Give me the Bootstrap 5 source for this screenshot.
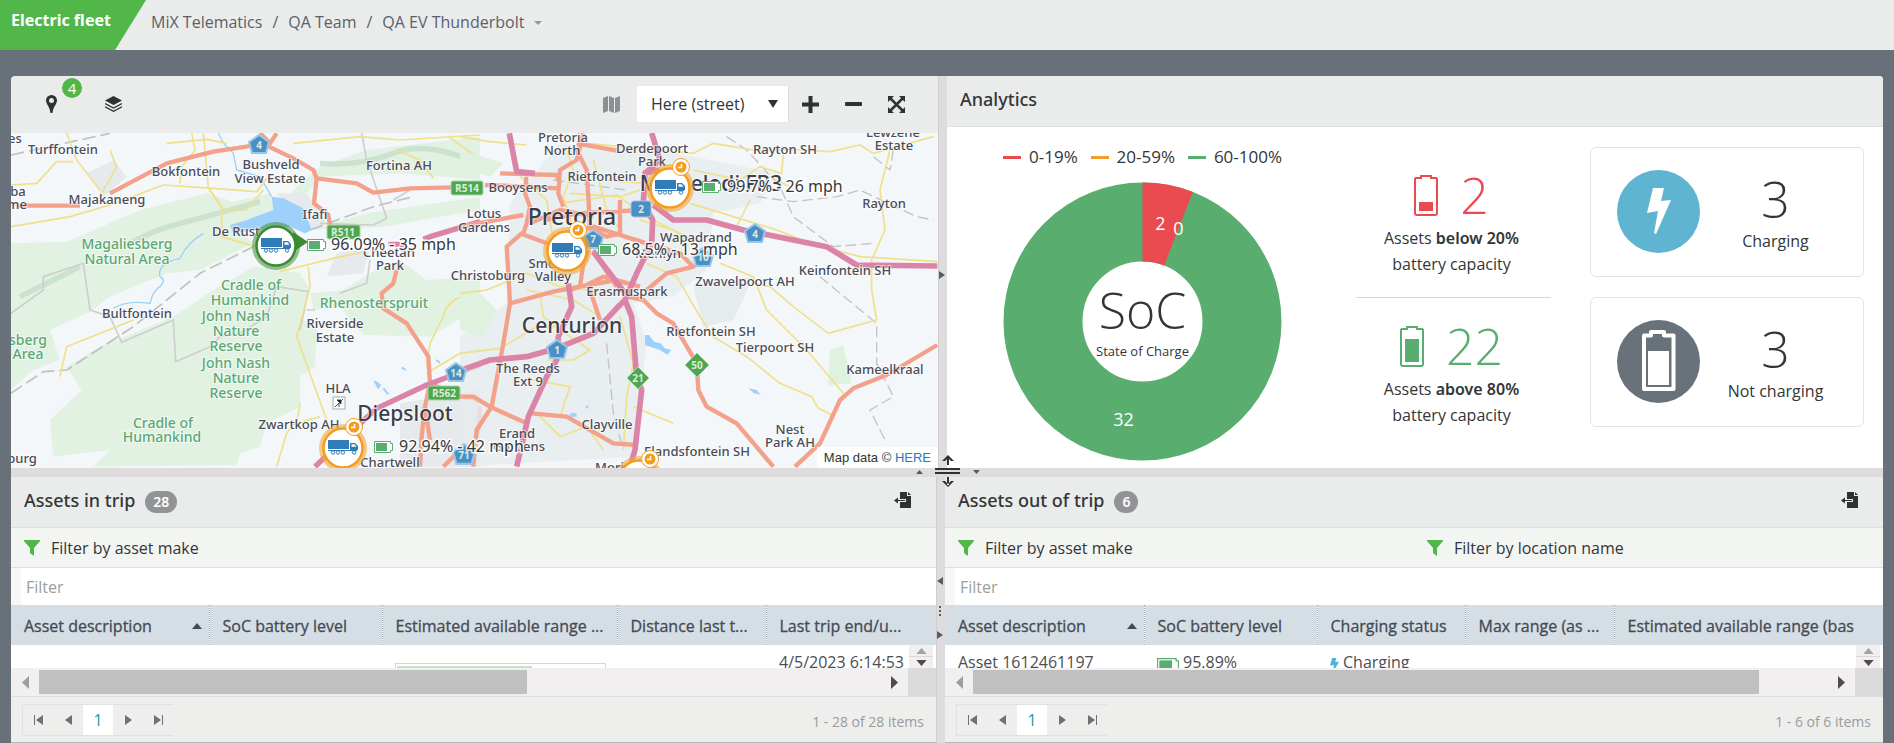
<!DOCTYPE html>
<html lang="en">
<head>
<meta charset="utf-8">
<meta name="viewport" content="width=device-width, initial-scale=1">
<title>Electric fleet</title>
<link rel="stylesheet" href="https://cdn.jsdelivr.net/npm/bootstrap@5.3.0/dist/css/bootstrap.min.css">
<style>
  :root { --slate:#68707a; --bar:#eaecec; --split:#dedcdd; --ink:#333537; --line:#dcdedf; --green:#50b748; --leaf:#59ae6f; --red:#e94b50; }
  body { font-family:"Open Sans","Noto Sans",sans-serif; font-size:16px; line-height:24px; color:var(--ink); background:var(--slate); min-height:100vh; }
  button { border:0; background:none; padding:0; color:inherit; }
  svg { display:block; }
  .topbar { height:50px; background:var(--bar); }
  .app-tag { width:146px; padding:8px 11px; background:var(--green); color:#fff; font-family:"Noto Sans",sans-serif; font-weight:700; clip-path:polygon(0 0,100% 0,115px 100%,0 100%); white-space:nowrap; }
  .crumbs { color:#5b6168; --bs-breadcrumb-divider-color:#5b6168; --bs-breadcrumb-item-padding-x:10px; margin:-7px 0 0 5px; }
  .crumbs a { color:inherit; text-decoration:none; }
  .crumbs .dropdown-toggle::after { margin-left:10px; color:#999; vertical-align:3px; border-width:4px; border-bottom:0; }
  .board { margin:26px 11px 0; }
  .halves { display:grid; grid-template-columns:minmax(0,927fr) 9px minmax(0,936fr); }
  .lower { grid-template-columns:minmax(0,925fr) 9px minmax(0,938fr); }
  .upper { min-height:392px; border-radius:4px 4px 0 0; overflow:hidden; }
  .splitter { background:var(--split); position:relative; color:#555; border-left:1px solid #cfcdce; }
  .h-splitter { height:9px; background:var(--split); position:relative; }
  .tick { position:absolute; }
  .panel-head { height:51px; padding:0 13px 4px; background:var(--bar); border-bottom:1px solid var(--line); font-family:"Noto Sans",sans-serif; font-size:18px; font-weight:500; }
  .map-tools { height:57px; padding:10px 20px 10px 21px; background:var(--bar); }
  .tool { width:43px; height:36px; display:flex; align-items:center; justify-content:center; }
  .tool-left { width:38px; }
  .count-dot { position:absolute; left:30px; top:-8px; width:20px; height:20px; border-radius:50%; background:var(--green); color:#fff; font-size:15px; line-height:20px; text-align:center; }
  .map-select { width:152px; height:36px; border:0; padding:0 12px 0 14px; background:#fff; appearance:none; color:var(--ink); border-right:1px solid var(--line); }
  .select-arrow { position:absolute; right:11px; top:14px; pointer-events:none; }
  .map { position:relative; min-height:0; background:#f4f7f9; overflow:hidden; }
  .map > svg { position:absolute; width:100%; height:100%; }
  .map-credit { position:absolute; right:0; bottom:0; padding:0 7px; font:13px/21px "Liberation Sans",sans-serif; background:rgba(255,255,255,.8); }
  .map-credit a { color:#2a7ab8; text-decoration:none; }
  .place { font-family:"Noto Sans",sans-serif; font-weight:500; font-size:13px; fill:#4a4c58; text-anchor:middle; paint-order:stroke; stroke:#fff; stroke-width:2px; stroke-opacity:.6; }
  .city { font-size:21px; fill:#3c3e49; }
  .capital { font-size:23px; fill:#3c3e49; }
  .park { fill:#5aa873; font-size:14px; }
  .shield { font-size:10px; font-weight:700; fill:#dcecd8; text-anchor:middle; }
  .reading { font-family:"Noto Sans",sans-serif; font-size:16px; font-weight:400; fill:#35383c; paint-order:stroke; stroke:#fff; stroke-width:3px; stroke-opacity:.85; }
  .analytics { padding:16px 19px 0 56px; background:#fff; }
  .legend-row { font-size:17px; margin:2px 0 13px; }
  .legend-key { width:18px; height:3px; }
  .donut-col { width:279px; margin-right:74px; }
  .stat-col { width:195px; margin-right:39px; text-align:center; line-height:26px; }
  .figure-num { font-size:50px; line-height:52px; font-weight:300; }
  .figure-row { margin-bottom:4px; gap:22px; }
  .stat { height:150px; padding:22px 4px 0 0; }
  .stat + .stat { border-top:1px solid #d4d6d8; }
  .stat b { font-family:"Noto Sans",sans-serif; font-weight:600; }
  .charge-card { height:130px; border:1px solid #e0e3e4; border-radius:6px; padding:2px 12px 0 26px; }
  .charge-card .figure-num { margin-bottom:4px; }
  .disc { width:83px; height:83px; border-radius:50%; margin-bottom:4px; }
  .count-pill { background:#929397; color:#fff; font-size:14px; line-height:22px; font-weight:600; border-radius:11px; padding:0 8px; margin:3px 0 0 10px; }
  .filter-line { height:40px; padding:0 13px; gap:13px; background:#f3f5f3; border-bottom:1px solid var(--line); overflow:hidden; }
  .filter-line button { width:50%; gap:11px; flex-shrink:0; }
  .filter-input { height:37px; width:100%; border:0; border-left:10px solid #f6f7f6; padding:0 5px; display:block; color:var(--ink); }
  .filter-input::placeholder { color:#9aa09c; }
  .grid-view { height:63px; overflow:hidden; position:relative; background:#fff; }
  .grid-view table { table-layout:fixed; width:100%; border-collapse:collapse; }
  .grid-view th { height:40px; padding:2px 8px 0 13px; background:#d6dee5; color:#434a54; font-weight:500; -webkit-text-stroke:.3px #434a54; white-space:nowrap; border-right:1px dotted #a9b2bb; position:relative; overflow:hidden; }
  .grid-view th:last-child { border-right:0; }
  .grid-view th svg { position:absolute; right:7px; top:18px; }
  .grid-view td { padding:5px 0 0 13px; height:40px; vertical-align:top; white-space:nowrap; font-weight:400; color:#4a4e53; }
  .range-meter { width:211px; height:18px; border:1px solid #d6d6d6; margin-top:13px; padding:2px 0 0 1px; background:#fff; }
  .range-fill { height:12px; background:#c4e2c8; }
  .v-scroll { position:absolute; right:3px; top:40px; width:24px; height:23px; background:#f1eff0; display:flex; flex-direction:column; align-items:center; justify-content:space-evenly; }
  .v-scroll hr { width:100%; margin:0; color:#999; }
  .h-scroll { height:29px; background:#f1eff0; border-bottom:1px solid var(--line); }
  .h-scroll .end { width:28px; display:flex; align-items:center; justify-content:center; }
  .h-thumb { height:24px; background:#c0c0c0; }
  .h-corner { width:28px; background:#dadada; align-self:stretch; }
  .pager { height:46px; padding:0 12px 0 11px; background:#eeeeed; border-bottom:1px solid #b5b7b8; color:#999c9e; font-size:14px; }
  .pager-box { border:1px solid #e0e2e2; border-right:0; height:32px; color:#777a7c; }
  .pager-box button, .pager-box span { width:30px; height:30px; display:flex; align-items:center; justify-content:center; }
  .pager-box span { background:#fff; color:#2a9a96; font-size:16px; }
  .resize-mark { position:absolute; left:50%; top:455px; z-index:3; margin-left:-12px; }
</style>
</head>
<body class="d-flex flex-column">

<svg width="0" height="0" class="position-absolute" aria-hidden="true">
  <symbol id="i-up" viewBox="0 0 12 7"><path d="M0 7L6 0l6 7z" fill="currentColor"/></symbol>
  <symbol id="i-down" viewBox="0 0 12 7"><path d="M0 0l6 7 6-7z" fill="currentColor"/></symbol>
  <symbol id="i-left" viewBox="0 0 7 13"><path d="M7 0L0 6.500 7 13z" fill="currentColor"/></symbol>
  <symbol id="i-right" viewBox="0 0 7 13"><path d="M0 0l7 6.500L0 13z" fill="currentColor"/></symbol>
  <symbol id="i-funnel" viewBox="0 0 16 16"><path d="M0 0h16v1L10 8v8l-4-3V8L0 1z" fill="#50b748"/></symbol>
  <symbol id="i-export" viewBox="0 0 17 16"><path d="M6 0h7v4h4v12H6v-6h6V7H6z" fill="#2f3133"/><path d="M14 0l3 3h-3z" fill="#2f3133"/><path d="M0 8.500l4-3V8h7v1H4v2.500z" fill="#2f3133"/></symbol>
  <symbol id="i-bat-v" viewBox="0 0 24 42"><path d="M2 4h5V2h10v2h5q1 0 1 1v34q0 2-2 2H3q-2 0-2-2V5q0-1 1-1z" fill="none" stroke="currentColor" stroke-width="2"/></symbol>
  <symbol id="i-bat-h" viewBox="0 0 19 12"><path d="M.500.500h16v2h2v7h-2v2H.500z" fill="#fff" stroke="#59ae6f"/><path d="M2 2h11v8H2z" fill="#59ae6f"/></symbol>
  <symbol id="i-bolt" viewBox="0 0 24 46"><path d="M6 0h11l-3 13 10-1L9 46l-2-1 4-22-11 2z" fill="currentColor"/></symbol>
  <symbol id="i-truck" viewBox="0 0 30 15"><g fill="#2f7cb8"><path d="M0 0h21v9H0z"/><path fill-rule="evenodd" d="M0 10h29v1H0zM22 3h5l3 3v4h-8zm1.500 1.200v2.500h5l-2-2.500z"/></g><g fill="#fff" stroke="#2f7cb8"><circle cx="5" cy="12.500" r="1.700"/><circle cx="10" cy="12.500" r="1.700"/><circle cx="15" cy="12.500" r="1.700"/><circle cx="26" cy="12.500" r="1.700"/></g></symbol>
  <symbol id="i-marker" viewBox="-25 -30 50 55"><circle r="24" fill="#f5a63a" opacity=".6"/><circle r="19.500" fill="#fff" stroke="#f49c1c" stroke-width="2.500"/><use href="#i-truck" x="-15" y="-8" width="30" height="15"/><circle cx="11" cy="-21" r="8.500" fill="#fff" stroke="#f49c1c" stroke-width="1"/><circle cx="11" cy="-21" r="5.500" fill="#f49c1c"/><path d="M11.500-24v3.500H8" fill="none" stroke="#fff" stroke-width="1.500"/></symbol>
  <symbol id="i-pent" viewBox="0 0 22 20"><path d="M11 1l10 7-3 11H4L1 8z" fill="#4a90c6" stroke="#9cc6e4" stroke-width="2"/></symbol>
</svg>

<header class="topbar d-flex">
  <div class="app-tag">Electric fleet</div>
  <nav class="d-flex align-items-center" aria-label="breadcrumb">
    <ol class="breadcrumb crumbs">
      <li class="breadcrumb-item"><a href="#">MiX Telematics</a></li>
      <li class="breadcrumb-item"><a href="#">QA Team</a></li>
      <li class="breadcrumb-item"><a href="#" class="dropdown-toggle">QA EV Thunderbolt</a></li>
    </ol>
  </nav>
</header>

<main class="board flex-grow-1 d-flex flex-column">
  <div class="halves upper flex-grow-1">
    <section class="d-flex flex-column">
      <div class="map-tools d-flex justify-content-between">
        <div class="d-flex position-relative">
          <button class="tool tool-left" aria-label="Locations"><svg width="11" height="18" viewBox="0 0 11 18" fill="#2f3133"><path fill-rule="evenodd" d="M5.500 0A5.500 5.500 0 0 1 11 5.500C11 9 7 12 6.500 18h-2C4 12 0 9 0 5.500A5.500 5.500 0 0 1 5.500 0zm0 3a2.500 2.500 0 1 0 0 5 2.500 2.500 0 0 0 0-5z"/></svg></button>
          <span class="count-dot">4</span>
          <button class="tool tool-left ms-4" aria-label="Layers"><svg width="17" height="16" viewBox="0 0 17 16"><path d="M8.500 0L17 4.500 8.500 9 0 4.500z" fill="#2f3133"/><path d="M0 7.500l8.500 4.500L17 7.500M0 10.800l8.500 4.500 8.500-4.500" fill="none" stroke="#2f3133" stroke-width="1.300"/></svg></button>
        </div>
        <div class="d-flex align-items-stretch">
          <span class="tool pe-2"><svg width="17" height="17" viewBox="0 0 17 17"><path d="M0 2l5-2v15l-5 2zm6-2l5 2v15l-5-2zm6 2l5-2v15l-5 2z" fill="#8d8f94"/></svg></span>
          <div class="position-relative">
            <select class="map-select" aria-label="Map style"><option>Here (street)</option></select>
            <svg class="select-arrow" width="10" height="8" viewBox="0 0 12 7" preserveAspectRatio="none"><path d="M0 0l6 7 6-7z" fill="#2f3133"/></svg>
          </div>
          <button class="tool" aria-label="Zoom in"><svg width="17" height="17" viewBox="0 0 17 17"><path d="M6.500 0h4v6.500H17v4h-6.500V17h-4v-6.500H0v-4h6.500z" fill="#2f3133"/></svg></button>
          <button class="tool" aria-label="Zoom out"><svg width="17" height="4" viewBox="0 0 17 4"><rect width="17" height="4" rx="1" fill="#2f3133"/></svg></button>
          <button class="tool" aria-label="Full screen"><svg width="17" height="17" viewBox="0 0 17 17"><path d="M0 0h6L0 6zm17 0v6l-6-6zM0 17v-6l6 6zm17 0h-6l6-6z" fill="#2f3133"/><path d="M2 2l13 13M15 2L2 15" stroke="#2f3133" stroke-width="2.500"/></svg></button>
        </div>
      </div>

      <div class="map flex-grow-1">
        <svg viewBox="11 133 927 335" preserveAspectRatio="xMinYMin slice" role="img" aria-label="Fleet map">
          <!-- western half -->
          <g transform="translate(0 130) scale(.33333)" fill="none" stroke-linejoin="round">
            <g fill="#e1f2e2">
              <path d="M33 470V340L200 335 420 240 620 190 700 215 810 190 830 270 690 285 760 340 600 420 500 430 330 500 270 545 150 600 180 690 100 720 33 780z"/>
              <path d="M150 870L245 780 200 710 300 650 520 560 640 480 760 410 900 430 930 480 900 560 950 600 945 710 900 740 900 830 800 880 780 950 720 970 710 1005 280 1010 330 960 160 980z"/>
              <path d="M870 190L960 110 1100 60 1440 20V150L1200 130 960 140 900 215zM930 300L1100 250 1440 200V240L1150 290z"/>
              <path d="M930 490L1030 480 1110 430 1200 390 1280 450 1440 440V530L1290 620 1090 615 1020 530 940 540z"/>
            </g>
            <path d="M380 345Q460 300 540 280T780 215M960 100Q1080 110 1180 70T1430 100M60 500L240 410" stroke="#c6ddcb" stroke-width="16" opacity=".8"/>
            <g fill="#e6eaec"><path d="M1200 820l240-40v230h-240zM1010 370l100-20-20 80-110 10zM830 190l90 0 60 90-60 20zM260 130l80-40 40 50-70 60z"/></g>
            <g stroke="#d0cdd1" stroke-width="5">
              <path d="M33 550L130 480V440L250 400 270 540 330 560 365 637 520 570 527 695 630 650 660 620 720 610 800 560 830 470 925 485 900 600M920 540h25M1020 490L1100 460 1110 390M1085 9L1100 90 1160 265 1120 285 960 280M1230 180L1180 210"/>
              <path d="M33 790L130 725 200 720 400 590 600 430 760 350M33 75L330 10M930 300L1120 230 1240 200" stroke-dasharray="40 15" stroke="#c0bfc4"/>
            </g>
            <path d="M655 9L670 40 700 70 710 120 780 140 815 200M610 310Q560 340 540 385 470 400 480 440 500 450 480 470 460 480 450 520 380 510 340 535" stroke="#9dd0f5" stroke-width="4"/>
            <path d="M815 200L850 205 910 235 935 300 915 310 870 290 760 300 700 310 690 285 740 270 820 240z" fill="#9dd0fb"/>
            <path d="M1125 755l15 10-5 8zM1150 775l15 18M1205 712l12 8M1308 690l12 8" stroke="#9dd0fb" stroke-width="6"/>
            <g stroke="#efe08a" stroke-width="5">
              <path d="M33 290L210 260 330 225 490 165 640 175 770 185 800 145M200 9L230 90 300 180M33 165L110 160 170 95 220 95M500 40L620 28 680 40M575 9L585 60 545 110 540 160M610 10L625 175 670 240 740 240 790 180M630 180L665 230 665 320 765 350"/>
              <path d="M840 425L1000 385 1095 365M925 410L930 470 890 620 980 870M890 870L860 910 830 1010M960 860L890 880 900 820M1440 485Q1340 500 1330 560L1290 640 1280 710M1280 730L1380 670 1440 660M180 740L200 650 400 570M880 40L1080 20 1200 30 1440 15M1190 60L1260 90 1300 145M1345 20L1430 80M300 200L350 110 330 60" />
            </g>
            <g stroke="#f3a18b" stroke-width="13">
              <path d="M50 227H240M330 190L500 100 640 65 790 42 880 85 940 120 950 145 1070 160 1120 188 1230 175 1360 172M950 145L942 220 985 255 990 285M780 9L810 40 830 10M1190 420L1180 460 1145 490 1150 535 1220 580 1285 680 1290 760 1275 830 1265 920 1260 1010M1290 760L1380 800 1420 805 1440 815M1275 830L1290 930M1440 880L1425 930 1380 960 1330 1010M1440 830L1435 900"/>
            </g>
            <path d="M945 1010L1060 900 1130 835 1280 765 1440 705M1270 328L1290 320 1440 275M1165 343H1215" stroke="#dc84a7" stroke-width="16"/>
          </g>
          <!-- eastern half -->
          <g transform="translate(460 130) scale(.33333)" fill="none" stroke-linejoin="round">
            <g fill="#e6ebee"><path d="M0 620L140 520 150 220 300 40 600 60 950 130 900 220 760 250 740 420 640 500 520 520 560 640 520 980 0 1010z" opacity=".8"/><path d="M700 470l180-30-60 130-90 20z"/></g>
            <path d="M0 480L50 480 110 540 70 620 0 600zM1110 660l40-15 25 115-70 5zM0 60l130 40-40 40-90-30z" fill="#dff1df"/>
            <path d="M555 615l12 0 15 20 20 5 12 15 20 5-12 14-22-14-45-15zM865 775l25 5 12 15-20-5zM375 830l12-5-5 12zM330 850h20v10h-20zM788 10l8 5M758 225l10 5" fill="#9dd0fb"/>
            <g stroke="#c3c2c7" stroke-width="4" stroke-dasharray="32 14">
              <path d="M800 20L860 60 960 170 1000 260 1120 350 1240 340M1300 60L1290 120 1240 80M890 200L1000 215 1130 200 1200 180 1370 260 1420 270M1080 440L1250 580 1250 700 1300 800 1230 840 1280 940M440 640L460 850 490 960M280 150L500 180"/>
            </g>
            <g stroke="#efe08a" stroke-width="5">
              <path d="M0 20L90 35 200 45M380 40L700 70 760 40 880 60 1030 60 1110 65 1200 45 1240 70 1420 20M970 70L965 130 900 110 840 150 700 120M1290 60L1260 180 1275 300 1235 390 1235 480 1250 570 1105 610 1000 530 930 470 880 460M690 220L820 260 950 300 1050 340 1200 380 1432 395M780 400L880 440 920 540 1040 660 1150 790M560 400L650 440 720 560 760 620 860 680 960 760 1055 800 1075 835 1115 855M0 670L120 655 230 590 290 590M0 490L80 480 200 430 300 470 470 490M240 490L250 560 330 620 390 660 340 690 260 690M330 190L480 200 540 180M300 220L470 195 560 260 700 330M480 560L520 700 500 800 490 960M320 60L340 120 310 200 340 300M400 90L440 240 500 330M200 480L340 510 420 560M420 150L560 160M220 750L330 770 300 860 M540 270L640 300 740 380M180 140L260 210 280 330M240 860L300 920 380 890 430 960M930 140L1010 180 M640 880L520 830M870 210L830 290"/>
            </g>
            <g stroke="#f3a18b" stroke-width="13">
              <path d="M75 165L200 170 290 175M120 130L290 135 300 160M350 40L470 62M370 10L350 90 300 120 295 190 310 230M200 130L195 190 210 230 200 280 190 310M350 60L380 120 385 200 390 290 340 310M0 290L190 255M180 310L260 340M185 310L140 350 145 430 150 520 130 640 95 830 50 900 40 1010M0 800L40 800 90 830 200 880M215 850L320 860 460 940 530 945M260 345L400 290 560 340M480 210V310L440 320 400 300M550 240L350 250 260 270M150 520L280 485 330 475 470 450 540 470M330 480L360 470 370 400 385 360M400 360L420 395 470 470M500 500L550 510 590 550 640 580 710 700 715 780 740 830 830 880 940 1010M560 480L620 430 700 410 660 370 560 340M390 480L420 570M370 470L430 440 500 460M1005 1010L1080 940 1140 810 1180 775 1280 735 1432 645M210 280L300 240 400 260"/>
            </g>
            <g stroke="#dc84a7" stroke-width="17">
              <path d="M0 722L90 690 200 680 290 655 400 610 470 535 495 510 530 430 575 340 578 270 550 220 555 130 600 90 575 9M495 510L515 560 530 740 545 780 525 960 510 1010M550 130L600 120M148 10L170 125 225 130M580 225L640 270 740 270 850 300 1100 350 1190 405 1432 408M495 490L400 365M325 460L335 530 295 620 290 690 260 740 205 860 170 1010"/>
            </g>
          </g>
          <g>
            <use href="#i-pent" x="248" y="134" width="22" height="20"/><use href="#i-pent" x="744" y="223" width="22" height="20"/><use href="#i-pent" x="546" y="339" width="22" height="20"/><use href="#i-pent" x="445" y="362" width="22" height="20"/><use href="#i-pent" x="452" y="443" width="24" height="22"/><use href="#i-pent" x="582" y="229" width="22" height="20"/><use href="#i-pent" x="691" y="247" width="24" height="20"/>
            <rect x="631" y="201" width="20" height="16" rx="3" fill="#4a90c6" stroke="#9cc6e4"/>
            <g fill="#4fa64e" stroke="#a8d6a6"><rect x="451" y="181" width="32" height="14" rx="2"/><rect x="327" y="225" width="33" height="14" rx="2"/><rect x="428" y="386" width="32" height="14" rx="2"/><path d="M697 353l12 12-12 12-12-12zM638 367l11 11-11 11-11-11z"/></g>
            <g class="shield"><text x="259" y="149">4</text><text x="755" y="238">4</text><text x="557" y="354">1</text><text x="456" y="377">14</text><text x="464" y="459">71</text><text x="593" y="243">7</text><text x="703" y="261">10</text><text x="641" y="213">2</text><text x="467" y="192">R514</text><text x="343" y="236">R511</text><text x="444" y="397">R562</text><text x="697" y="369">50</text><text x="638" y="382">21</text></g>
            <rect x="333" y="397" width="12" height="12" fill="#fff" stroke="#aaa"/><path d="M335 407l8-8M337 400l4 4v-4zm2 3v4" stroke="#444"/>
          </g>
          <g class="place">
            <text x="15" y="143">es</text><text x="63" y="154">Turffontein</text><text x="186" y="176">Bokfontein</text><text x="271" y="169">Bushveld</text><text x="270" y="183">View Estate</text><text x="399" y="170">Fortina AH</text><text x="18" y="196">ba</text><text x="17" y="209">me</text><text x="107" y="204">Majakaneng</text><text x="315" y="219">Ifafi</text><text x="236" y="236">De Rust</text><text x="389" y="257">Cheetah</text><text x="390" y="270">Park</text><text x="137" y="318">Bultfontein</text><text x="335" y="328">Riverside</text><text x="335" y="342">Estate</text><text x="338" y="393">HLA</text><text x="299" y="429">Zwartkop AH</text><text x="390" y="467">Chartwell</text><text x="22" y="463">burg</text>
            <text x="563" y="142">Pretoria</text><text x="562" y="155">North</text><text x="652" y="153">Derdepoort</text><text x="652" y="166">Park</text><text x="785" y="154">Rayton SH</text><text x="893" y="137">Lewzene</text><text x="894" y="150">Estate</text><text x="602" y="181">Rietfontein</text><text x="518" y="192">Booysens</text><text x="884" y="208">Rayton</text><text x="484" y="218">Lotus</text><text x="484" y="232">Gardens</text><text x="696" y="242">Wapadrand</text><text x="658" y="258">Menlyn</text><text x="845" y="275">Keinfontein SH</text><text x="745" y="286">Zwavelpoort AH</text><text x="488" y="280">Christoburg</text><text x="548" y="268">Smuts</text><text x="553" y="281">Valley</text><text x="627" y="296">Erasmuspark</text><text x="711" y="336">Rietfontein SH</text><text x="775" y="352">Tierpoort SH</text><text x="885" y="374">Kameelkraal</text><text x="528" y="373">The Reeds</text><text x="528" y="386">Ext 9</text><text x="607" y="429">Clayville</text><text x="790" y="434">Nest</text><text x="790" y="447">Park AH</text><text x="517" y="438">Erand</text><text x="519" y="451">Gardens</text><text x="697" y="456">Elandsfontein SH</text><text x="612" y="472">Morit</text>
            <text class="capital" x="572" y="225">Pretoria</text><text class="city" x="711" y="191">Mamelodi FB3</text><text class="city" x="572" y="333">Centurion</text><text class="city" x="405" y="421">Diepsloot</text>
            <g class="park"><text x="127" y="249">Magaliesberg</text><text x="127" y="264">Natural Area</text><text x="251" y="290">Cradle of</text><text x="250" y="305">Humankind</text><text x="236" y="321">John Nash</text><text x="236" y="336">Nature</text><text x="236" y="351">Reserve</text><text x="236" y="368">John Nash</text><text x="236" y="383">Nature</text><text x="236" y="398">Reserve</text><text x="374" y="308">Rhenosterspruit</text><text x="28" y="345">sberg</text><text x="28" y="359">Area</text><text x="163" y="428">Cradle of</text><text x="162" y="442">Humankind</text></g>
          </g>
          <g><circle cx="276" cy="246" r="24" fill="#4d9a45" opacity=".6"/><path d="M293 232l15 10-15 10z" fill="#3c8a34"/><circle cx="276" cy="246" r="19.500" fill="#fff" stroke="#3c8a34" stroke-width="2.500"/><use href="#i-truck" x="261" y="238" width="30" height="15"/></g>
          <use href="#i-marker" x="542" y="221" width="50" height="55"/>
          <use href="#i-marker" x="645" y="158" width="50" height="55"/>
          <use href="#i-marker" x="318" y="418" width="50" height="55"/>
          <use href="#i-marker" x="614" y="450" width="50" height="55"/>
          <g><use href="#i-bat-h" x="307" y="239" width="19" height="12"/><use href="#i-bat-h" x="598" y="244" width="19" height="12"/><use href="#i-bat-h" x="702" y="181" width="19" height="12"/><use href="#i-bat-h" x="374" y="441" width="19" height="12"/></g>
          <g class="reading"><text x="331" y="250">96.09% - 35 mph</text><text x="622" y="255">68.5% - 13 mph</text><text x="727" y="192">99.7% - 26 mph</text><text x="399" y="452">92.94% - 42 mph</text></g>
        </svg>
        <div class="map-credit">Map data © <a href="#">HERE</a></div>
      </div>
    </section>

    <div class="splitter"><svg class="tick" style="top:195px" width="6" height="8" viewBox="0 0 7 13" preserveAspectRatio="none"><path d="M0 0l7 6.500L0 13z" fill="#555b63"/></svg></div>

    <section class="d-flex flex-column bg-white">
      <div class="panel-head d-flex align-items-center">Analytics</div>
      <div class="analytics d-flex flex-grow-1">
        <div class="donut-col">
          <div class="legend-row d-flex justify-content-between">
            <span class="d-flex align-items-center gap-2"><i class="legend-key" style="background:#e94b50"></i>0-19%</span>
            <span class="d-flex align-items-center gap-2"><i class="legend-key" style="background:#f59e2a"></i>20-59%</span>
            <span class="d-flex align-items-center gap-2"><i class="legend-key" style="background:#59ae6f"></i>60-100%</span>
          </div>
          <svg width="279" height="279" viewBox="-139.500 -139.500 279 279" text-anchor="middle" fill="#333537">
            <circle r="99.500" fill="none" stroke="#59ae6f" stroke-width="79"/>
            <path d="M0-139A139 139 0 0 1 50.300-129.600L21.700-55.900A60 60 0 0 0 0-60z" fill="#e94b50"/>
            <text y="7" font-size="50" font-weight="300">SoC</text>
            <text y="34" font-size="13">State of Charge</text>
            <g fill="#fff" font-size="18"><text x="18" y="-92">2</text><text x="36" y="-87">0</text><text x="-19" y="104">32</text></g>
          </svg>
        </div>
        <div class="stat-col pt-1">
          <div class="stat">
            <div class="figure-row d-flex justify-content-center align-items-center" style="color:#e94b50"><svg width="24" height="42"><use href="#i-bat-v"/><path d="M5 28h14v9H5z" fill="currentColor"/></svg><span class="figure-num">2</span></div>
            Assets <b>below 20%</b><br>battery capacity
          </div>
          <div class="stat">
            <div class="figure-row d-flex justify-content-center align-items-center" style="color:#59ae6f"><svg width="24" height="42"><use href="#i-bat-v"/><path d="M5 14h14v23H5z" fill="currentColor"/></svg><span class="figure-num">22</span></div>
            Assets <b>above 80%</b><br>battery capacity
          </div>
        </div>
        <div class="flex-grow-1 d-flex flex-column pt-1">
          <div class="charge-card d-flex align-items-center mb-3">
            <div class="disc d-flex align-items-center justify-content-center text-white" style="background:#5fb4d2"><svg width="24" height="46"><use href="#i-bolt"/></svg></div>
            <div class="flex-grow-1 text-center"><div class="figure-num">3</div>Charging</div>
          </div>
          <div class="charge-card d-flex align-items-center mt-1">
            <div class="disc d-flex align-items-center justify-content-center text-white" style="background:#69717b"><svg width="35" height="62" viewBox="0 0 35 62"><path d="M3 5.500h7V2h13v3.500h9.500V59H3z" fill="none" stroke="#fff" stroke-width="4" stroke-linejoin="round"/><path d="M7 21h21v34H7z" fill="#fff"/></svg></div>
            <div class="flex-grow-1 text-center"><div class="figure-num">3</div>Not charging</div>
          </div>
        </div>
      </div>
    </section>
  </div>

  <div class="h-splitter">
    <svg class="tick" style="left:905px;top:1px" width="7" height="6" color="#555b63"><use href="#i-up"/></svg>
    <svg class="tick" style="left:962px;top:1px" width="7" height="6" color="#555b63"><use href="#i-down"/></svg>
  </div>

  <div class="halves lower">
    <section>
      <div class="panel-head d-flex align-items-center">Assets in trip <span class="count-pill">28</span><button class="ms-auto me-2" aria-label="Export"><svg class="me-1" width="17" height="16"><use href="#i-export"/></svg></button></div>
      <div class="filter-line d-flex"><button class="d-flex align-items-center"><svg width="16" height="16"><use href="#i-funnel"/></svg>Filter by asset make</button></div>
      <input class="filter-input" type="text" placeholder="Filter" aria-label="Filter assets in trip">
      <div class="grid-view">
        <table>
          <colgroup><col style="width:198px"><col style="width:173px"><col style="width:235px"><col style="width:149px"><col></colgroup>
          <thead><tr><th>Asset description<svg width="10" height="6" viewBox="0 0 12 7"><use href="#i-up"/></svg></th><th>SoC battery level</th><th>Estimated available range ...</th><th>Distance last t...</th><th>Last trip end/u...</th></tr></thead>
          <tbody><tr><td></td><td></td><td><div class="range-meter"><div class="range-fill" style="width:65%"></div></div></td><td></td><td>4/5/2023 6:14:53</td></tr></tbody>
        </table>
        <div class="v-scroll"><svg width="11" height="6" color="#a3a69c"><use href="#i-up"/></svg><hr><svg width="11" height="6" color="#54484c"><use href="#i-down"/></svg></div>
      </div>
      <div class="h-scroll d-flex align-items-center">
        <span class="end"><svg width="7" height="13" color="#9c9f98"><use href="#i-left"/></svg></span>
        <div class="flex-grow-1"><div class="h-thumb" style="width:58%"></div></div>
        <span class="end"><svg width="7" height="13" color="#54484c"><use href="#i-right"/></svg></span>
        <span class="h-corner"></span>
      </div>
      <div class="pager d-flex align-items-center justify-content-between">
        <div class="pager-box d-flex"><button aria-label="First"><svg width="9" height="10"><path d="M0 0h1v10H0zM9 0v10L2 5z" fill="#6e7174"/></svg></button><button aria-label="Previous"><svg width="7" height="10" viewBox="0 0 7 10"><path d="M7 0v10L0 5z" fill="#6e7174"/></svg></button><span>1</span><button aria-label="Next"><svg width="7" height="10"><path d="M0 0v10l7-5z" fill="#6e7174"/></svg></button><button aria-label="Last"><svg width="9" height="10"><path d="M8 0h1v10H8zM0 0v10l7-5z" fill="#6e7174"/></svg></button></div>
        <div class="pt-1">1 - 28 of 28 items</div>
      </div>
    </section>

    <div class="splitter">
      <svg class="tick" style="top:100px" width="6" height="62" viewBox="0 0 6 62" fill="#555b63"><path d="M6 0v8L0 4zM0 54v8l6-4zM2 29h2v2H2zm0 4h2v2H2zm0 4h2v2H2z"/></svg>
    </div>

    <section>
      <div class="panel-head d-flex align-items-center">Assets out of trip <span class="count-pill">6</span><button class="ms-auto me-2" aria-label="Export"><svg class="me-1" width="17" height="16"><use href="#i-export"/></svg></button></div>
      <div class="filter-line d-flex"><button class="d-flex align-items-center"><svg width="16" height="16"><use href="#i-funnel"/></svg>Filter by asset make</button><button class="d-flex align-items-center"><svg width="16" height="16"><use href="#i-funnel"/></svg>Filter by location name</button></div>
      <input class="filter-input" type="text" placeholder="Filter" aria-label="Filter assets out of trip">
      <div class="grid-view">
        <table>
          <colgroup><col style="width:199px"><col style="width:173px"><col style="width:148px"><col style="width:149px"><col></colgroup>
          <thead><tr><th>Asset description<svg width="10" height="6" viewBox="0 0 12 7"><use href="#i-up"/></svg></th><th>SoC battery level</th><th>Charging status</th><th>Max range (as ...</th><th>Estimated available range (bas</th></tr></thead>
          <tbody><tr><td>Asset 1612461197</td><td><div class="d-flex gap-1"><svg class="mt-2" width="22" height="14" viewBox="0 0 19 12"><use href="#i-bat-h"/></svg>95.89%</div></td><td><div class="d-flex gap-1"><svg class="mt-2" width="9" height="14" viewBox="0 0 24 46" preserveAspectRatio="none" color="#4db1d6"><use href="#i-bolt"/></svg>Charging</div></td><td></td><td></td></tr></tbody>
        </table>
        <div class="v-scroll"><svg width="11" height="6" color="#a3a69c"><use href="#i-up"/></svg><hr><svg width="11" height="6" color="#54484c"><use href="#i-down"/></svg></div>
      </div>
      <div class="h-scroll d-flex align-items-center">
        <span class="end"><svg width="7" height="13" color="#9c9f98"><use href="#i-left"/></svg></span>
        <div class="flex-grow-1"><div class="h-thumb" style="width:92%"></div></div>
        <span class="end"><svg width="7" height="13" color="#54484c"><use href="#i-right"/></svg></span>
        <span class="h-corner"></span>
      </div>
      <div class="pager d-flex align-items-center justify-content-between">
        <div class="pager-box d-flex"><button aria-label="First"><svg width="9" height="10"><path d="M0 0h1v10H0zM9 0v10L2 5z" fill="#6e7174"/></svg></button><button aria-label="Previous"><svg width="7" height="10"><path d="M7 0v10L0 5z" fill="#6e7174"/></svg></button><span>1</span><button aria-label="Next"><svg width="7" height="10"><path d="M0 0v10l7-5z" fill="#6e7174"/></svg></button><button aria-label="Last"><svg width="9" height="10"><path d="M8 0h1v10H8zM0 0v10l7-5z" fill="#6e7174"/></svg></button></div>
        <div class="pt-1">1 - 6 of 6 items</div>
      </div>
    </section>
  </div>
</main>
<svg class="resize-mark" width="25" height="32" viewBox="0 0 25 32"><path d="M0 13h25v2H0zM0 17h25v2H0zM12 1h2v9h-2zM12 22h2v8h-2zM13 0l6 6h-3l-3-3-3 3H7zM13 32l6-6h-3l-3 3-3-3H7z" fill="#2f3133"/></svg>
<script src="https://cdn.jsdelivr.net/npm/bootstrap@5.3.0/dist/js/bootstrap.bundle.min.js"></script>
</body>
</html>
